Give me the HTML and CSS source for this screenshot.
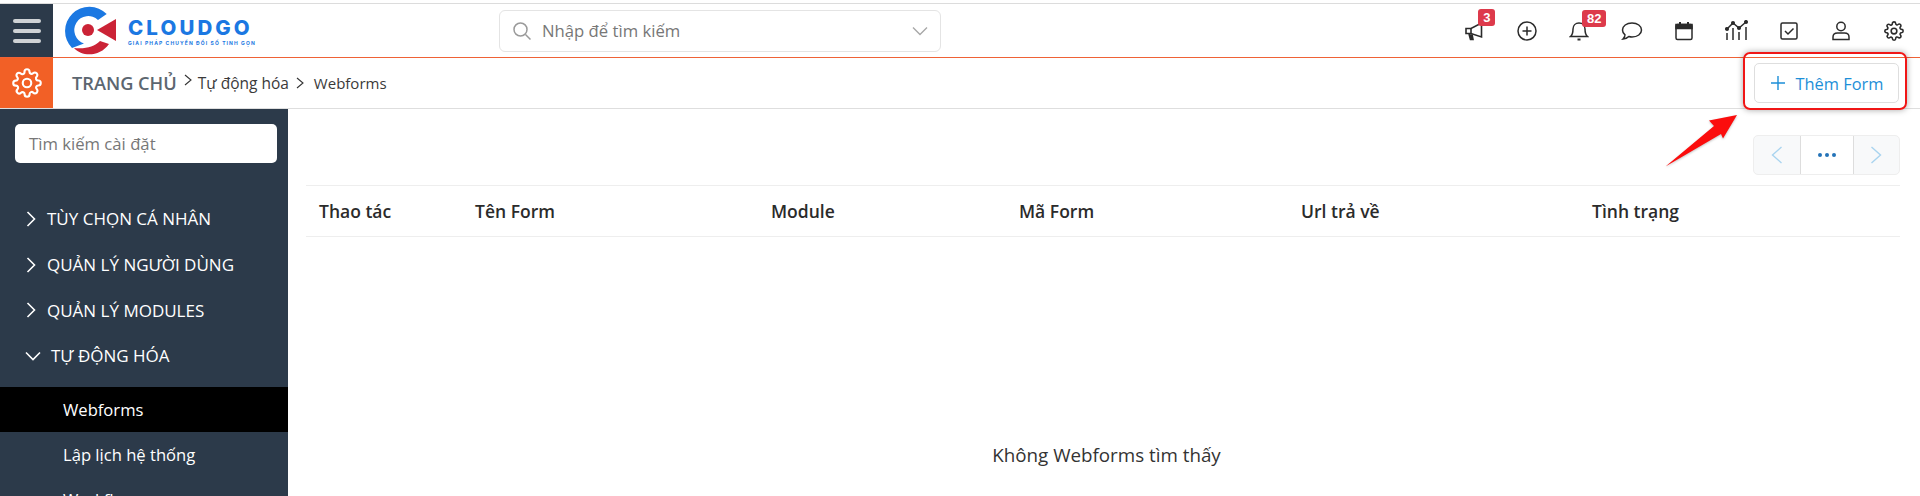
FILE: index.html
```html
<!DOCTYPE html>
<html lang="vi">
<head>
<meta charset="utf-8">
<title>Webforms</title>
<link rel="stylesheet" href="styles.css">
</head>
<body>
<div class="page">
  <header class="topbar">
    <button class="burger" aria-label="Menu"><span></span><span></span><span></span></button>
    <div class="logo">
      <svg class="logo-mark" width="54" height="50" viewBox="0 0 54 50">
        <path d="M42.7 9 A24 24 0 1 0 8 43 L20 38.4 A14 14 0 1 1 34 15 Z" fill="#1b78e2"/>
        <path d="M10 43 C18 52 36 52 45 39 L36 36 C30 42 22 44 10 43 Z" fill="#cb2336"/>
        <circle cx="24" cy="25" r="6" fill="#cb2336"/>
        <path d="M33 25 L52 14 V36 Z" fill="#cb2336"/>
      </svg>
      <div class="logo-text">
        <div class="logo-name">CLOUDGO</div>
        <div class="logo-sub">GIẢI PHÁP CHUYỂN ĐỔI SỐ TINH GỌN</div>
      </div>
    </div>
    <div class="global-search">
      <svg width="20" height="20" viewBox="0 0 20 20" fill="none" stroke="#9a9a9a" stroke-width="1.5"><circle cx="8.5" cy="8.5" r="6.5"/><path d="M13.5 13.5 L18.5 18.5"/></svg>
      <span class="global-search-text">Nhập để tìm kiếm</span>
      <svg class="search-caret" width="16" height="10" viewBox="0 0 16 10" fill="none" stroke="#a8a8a8" stroke-width="1.4"><path d="M1 1.5 L8 8.5 L15 1.5"/></svg>
    </div>
    <nav class="tools">
      <div class="tool">
        <svg width="20" height="20" viewBox="0 0 20 20" fill="none" stroke="#2b2b2b" stroke-width="1.6"><path d="M1 7.5 H6 L16.5 2 V16 L6 12.5 H1 Z"/><path d="M6 7.5 V12.5"/><path d="M4 13 L5.5 18.5 H8 L7 13.5" fill="#2b2b2b"/></svg>
        <span class="badge badge-one">3</span>
      </div>
      <div class="tool">
        <svg width="20" height="20" viewBox="0 0 20 20" fill="none" stroke="#2b2b2b" stroke-width="1.5"><circle cx="10" cy="10" r="9"/><path d="M10 5.5 V14.5 M5.5 10 H14.5"/></svg>
      </div>
      <div class="tool">
        <svg width="20" height="20" viewBox="0 0 20 20" fill="none" stroke="#2b2b2b" stroke-width="1.5"><path d="M1.5 15.5 C4 13.5 4 11 4 8 C4 4.5 6.5 2 10 2 C13.5 2 16 4.5 16 8 C16 11 16 13.5 18.5 15.5 Z"/><path d="M8.5 18.5 H11.5" stroke-width="2"/></svg>
        <span class="badge badge-two">82</span>
      </div>
      <div class="tool">
        <svg width="22" height="20" viewBox="0 0 22 20" fill="none" stroke="#2b2b2b" stroke-width="1.5"><path d="M11 2 C16.5 2 20.5 5 20.5 9 C20.5 13 16.5 16 11 16 C9.8 16 8.8 15.8 7.8 15.5 C6.5 16.8 4.5 17.8 2 18 C3.2 16.8 4 15.4 4 13.8 C2.4 12.6 1.5 11 1.5 9 C1.5 5 5.5 2 11 2 Z"/></svg>
      </div>
      <div class="tool">
        <svg width="20" height="20" viewBox="0 0 20 20" fill="none" stroke="#2b2b2b" stroke-width="1.5"><rect x="2" y="3.5" width="16" height="15" rx="1.5"/><path d="M2 3.5 H18 V7.5 H2 Z" fill="#2b2b2b"/><path d="M6 1 V4 M14 1 V4" stroke-width="2"/></svg>
      </div>
      <div class="tool">
        <svg width="24" height="22" viewBox="0 0 24 22" fill="none" stroke="#2b2b2b" stroke-width="1.5"><path d="M2 9 L8 3 L14 8 L21 2"/><circle cx="2" cy="9" r="1.3" fill="#2b2b2b"/><circle cx="8" cy="3" r="1.3" fill="#2b2b2b"/><circle cx="14" cy="8" r="1.3" fill="#2b2b2b"/><circle cx="21" cy="2" r="1.3" fill="#2b2b2b"/><path d="M2 13 V20 M8 8 V20 M14 12 V20 M21 7 V20"/></svg>
      </div>
      <div class="tool">
        <svg width="20" height="20" viewBox="0 0 20 20" fill="none" stroke="#2b2b2b" stroke-width="1.5"><rect x="2" y="2" width="16" height="16" rx="1.5"/><path d="M6 10 L9 13 L14.5 7.5"/></svg>
      </div>
      <div class="tool">
        <svg width="20" height="20" viewBox="0 0 20 20" fill="none" stroke="#2b2b2b" stroke-width="1.5"><circle cx="10" cy="5.5" r="4.2"/><path d="M2 18.5 V16 C2 13.5 4 12 6.5 12 H13.5 C16 12 18 13.5 18 16 V18.5 Z"/></svg>
      </div>
      <div class="tool">
        <svg width="20" height="20" viewBox="0 0 24 24" fill="none" stroke="#2b2b2b" stroke-width="1.9"><circle cx="12" cy="12" r="3.4"/><path d="M19.4 15a1.65 1.65 0 0 0 .33 1.82l.06.06a2 2 0 1 1-2.83 2.83l-.06-.06a1.65 1.65 0 0 0-2.82 1.17V21a2 2 0 1 1-4 0v-.09a1.65 1.65 0 0 0-2.82-1.12l-.06.06a2 2 0 1 1-2.83-2.83l.06-.06a1.65 1.65 0 0 0-1.17-2.82H3a2 2 0 1 1 0-4h.09a1.65 1.65 0 0 0 1.12-2.82l-.06-.06a2 2 0 1 1 2.83-2.83l.06.06a1.65 1.65 0 0 0 1.82.33H9a1.65 1.65 0 0 0 1-1.51V3a2 2 0 1 1 4 0v.09a1.65 1.65 0 0 0 2.82 1.12l.06-.06a2 2 0 1 1 2.83 2.83l-.06.06a1.65 1.65 0 0 0-.33 1.82V9a1.65 1.65 0 0 0 1.51 1H21a2 2 0 1 1 0 4h-.09a1.65 1.65 0 0 0-1.51 1z"/></svg>
      </div>
    </nav>
  </header>

  <div class="crumbbar">
    <div class="crumb-icon">
      <svg width="30" height="30" viewBox="0 0 24 24" fill="none" stroke="#fff" stroke-width="1.7"><circle cx="12" cy="12" r="3.4"/><path d="M19.4 15a1.65 1.65 0 0 0 .33 1.82l.06.06a2 2 0 1 1-2.83 2.83l-.06-.06a1.65 1.65 0 0 0-2.82 1.17V21a2 2 0 1 1-4 0v-.09a1.65 1.65 0 0 0-2.82-1.12l-.06.06a2 2 0 1 1-2.83-2.83l.06-.06a1.65 1.65 0 0 0-1.17-2.82H3a2 2 0 1 1 0-4h.09a1.65 1.65 0 0 0 1.12-2.82l-.06-.06a2 2 0 1 1 2.83-2.83l.06.06a1.65 1.65 0 0 0 1.82.33H9a1.65 1.65 0 0 0 1-1.51V3a2 2 0 1 1 4 0v.09a1.65 1.65 0 0 0 2.82 1.12l.06-.06a2 2 0 1 1 2.83 2.83l-.06.06a1.65 1.65 0 0 0-.33 1.82V9a1.65 1.65 0 0 0 1.51 1H21a2 2 0 1 1 0 4h-.09a1.65 1.65 0 0 0-1.51 1z"/></svg>
    </div>
    <div class="crumbs">
      <span class="crumb-home">TRANG CHỦ</span>
      <svg class="crumb-sep crumb-sep-high" width="8" height="12" viewBox="0 0 8 12" fill="none" stroke="#333" stroke-width="1.1"><path d="M1 1 L7 6 L1 11"/></svg>
      <span class="crumb-item">Tự động hóa</span>
      <svg class="crumb-sep" width="8" height="12" viewBox="0 0 8 12" fill="none" stroke="#333" stroke-width="1.1"><path d="M1 1 L7 6 L1 11"/></svg>
      <span class="crumb-item crumb-last">Webforms</span>
    </div>
    <button class="add-btn">
      <svg width="16" height="16" viewBox="0 0 16 16" fill="none" stroke="#1d8fd8" stroke-width="1.4"><path d="M8 1 V15 M1 8 H15"/></svg>
      <span>Thêm Form</span>
    </button>
  </div>

  <div class="main">
    <aside class="sidebar">
      <div class="side-search">Tìm kiếm cài đặt</div>
      <ul class="menu">
        <li class="menu-item"><svg width="10" height="16" viewBox="0 0 10 16" fill="none" stroke="#fff" stroke-width="1.6"><path d="M1.5 1 L8.5 8 L1.5 15"/></svg>TÙY CHỌN CÁ NHÂN</li>
        <li class="menu-item"><svg width="10" height="16" viewBox="0 0 10 16" fill="none" stroke="#fff" stroke-width="1.6"><path d="M1.5 1 L8.5 8 L1.5 15"/></svg>QUẢN LÝ NGƯỜI DÙNG</li>
        <li class="menu-item"><svg width="10" height="16" viewBox="0 0 10 16" fill="none" stroke="#fff" stroke-width="1.6"><path d="M1.5 1 L8.5 8 L1.5 15"/></svg>QUẢN LÝ MODULES</li>
        <li class="menu-item menu-open"><svg width="16" height="10" viewBox="0 0 16 10" fill="none" stroke="#fff" stroke-width="1.6"><path d="M1 1.5 L8 8.5 L15 1.5"/></svg>TỰ ĐỘNG HÓA</li>
      </ul>
      <ul class="submenu">
        <li class="sub-item sub-active">Webforms</li>
        <li class="sub-item">Lập lịch hệ thống</li>
        <li class="sub-item">Workflows</li>
      </ul>
    </aside>

    <section class="content">
      <div class="pager-row">
        <div class="pager">
          <span class="pager-btn"><svg width="12" height="18" viewBox="0 0 12 18" fill="none" stroke="#a9d4ef" stroke-width="1.4"><path d="M10.5 1 L1.5 9 L10.5 17"/></svg></span>
          <span class="pager-btn pager-mid"><i></i><i></i><i></i></span>
          <span class="pager-btn"><svg width="12" height="18" viewBox="0 0 12 18" fill="none" stroke="#a9d4ef" stroke-width="1.4"><path d="M1.5 1 L10.5 9 L1.5 17"/></svg></span>
        </div>
      </div>
      <div class="table-head">
        <span class="col col-action">Thao tác</span>
        <span class="col col-name">Tên Form</span>
        <span class="col col-module">Module</span>
        <span class="col col-code">Mã Form</span>
        <span class="col col-url">Url trả về</span>
        <span class="col col-status">Tình trạng</span>
      </div>
      <div class="empty">Không Webforms tìm thấy</div>
    </section>
  </div>

  <div class="note-box"></div>
  <svg class="note-arrow" width="84" height="68" viewBox="0 0 84 68"><path d="M0.5 54.5 L49 14 L44 8.5 L72 3 L58 26.5 L56 22 Z" fill="#fb0d0d"/></svg>
</div>
</body>
</html>
```

FILE: styles.css
```css
* { box-sizing: border-box; }
html, body { margin: 0; padding: 0; height: 100%; overflow: hidden; background: #fff; }
body { font-family: "Open Sans", "Noto Sans", sans-serif; color: #333; }
ul { list-style: none; margin: 0; padding: 0; }
.page { position: relative; width: 1920px; height: 496px; overflow: hidden; padding-top: 3px; }

.topbar { display: flex; align-items: center; height: 55px; border-top: 1px solid #dcdcdc; border-bottom: 1px solid #ef6236; }
.burger { width: 53px; height: 53px; flex: none; background: #2c3a4a; border: 0; padding: 0; display: flex; flex-direction: column; align-items: center; justify-content: center; gap: 6px; }
.burger span { display: block; width: 28px; height: 4px; border-radius: 2px; background: #cfd2d5; }
.logo { display: flex; align-items: center; width: 450px; padding-left: 11px; flex: none; }
.logo-mark { flex: none; margin-top: -1px; }
.logo-text { margin-left: 10px; display: flex; flex-direction: column; }
.logo-name { font-family: Inter, "Open Sans", sans-serif; font-weight: 800; font-size: 20.5px; line-height: 22px; letter-spacing: 3.1px; color: #1b78e2; margin-top: 2px; }
.logo-sub { font-family: Inter, "Open Sans", sans-serif; font-size: 5px; font-weight: 700; line-height: 8px; letter-spacing: 1.1px; color: #1b78e2; white-space: nowrap; }
.global-search { width: 442px; height: 42px; margin-left: -4px; border: 1px solid #e4e4e4; border-radius: 6px; display: flex; align-items: center; padding: 0 12px 0 12px; }
.global-search-text { font-size: 16.7px; color: #777; margin-left: 10px; flex: 1; }
.tools { display: flex; margin-left: auto; align-items: center; }
.tool { position: relative; width: 52.4px; height: 40px; display: flex; align-items: center; justify-content: center; }
.badge { position: absolute; background: #dd3a4b; color: #fff; font-family: "Liberation Sans", sans-serif; font-weight: 700; font-size: 13px; line-height: 17px; height: 17px; border-radius: 3px; text-align: center; }
.badge-one { top: -2px; left: 30px; width: 17px; }
.badge-two { top: -1px; left: 29px; width: 24px; }

.crumbbar { display: flex; align-items: center; height: 51px; border-bottom: 1px solid #dedede; }
.crumb-icon { width: 53px; height: 50px; flex: none; background: #f26026; display: flex; align-items: center; justify-content: center; }
.crumbs { display: flex; align-items: center; margin-left: 19px; }
.crumb-home { font-size: 18.2px; font-weight: 600; color: #5c6670; }
.crumb-sep { margin: 0 6px 0 7px; }
.crumb-sep-high { margin-top: -6px; }
.crumb-item { font-size: 15.5px; color: #3a3a3a; }
.crumb-last { margin-left: 4px; font-size: 15px; }
.add-btn { margin-left: auto; margin-right: 21px; width: 145px; height: 40px; background: #fff; border: 1px solid #dedede; border-radius: 5px; display: flex; align-items: center; justify-content: center; gap: 10px; font-family: inherit; font-size: 16.4px; color: #1d8fd8; padding: 0; }

.main { display: flex; height: 387px; }
.sidebar { width: 288px; flex: none; background: #2c3a4a; padding-top: 15px; overflow: hidden; }
.side-search { width: 262px; height: 39px; margin-left: 15px; background: #fff; border-radius: 5px; font-size: 16.7px; line-height: 39px; padding-left: 14px; color: #777; }
.menu { margin-top: 33px; }
.menu-item { display: flex; align-items: center; height: 45.7px; padding-left: 26px; font-size: 17px; color: #fff; }
.menu-item svg { margin-right: 11px; }
.menu-open { padding-left: 25px; }
.menu-open svg { margin-right: 10px; }
.submenu { margin-top: 8px; }
.sub-item { height: 45px; line-height: 45px; padding-left: 63px; font-size: 16.6px; color: #fff; }
.sub-active { background: #000; }

.content { flex: 1; padding: 0 20px 0 18px; min-width: 0; }
.pager-row { display: flex; justify-content: flex-end; padding-top: 26px; height: 76px; }
.pager { display: flex; height: 40px; width: 147px; background: #f8f9fa; border: 1px solid #eeeeee; border-radius: 5px; }
.pager-btn { flex: 1; display: flex; align-items: center; justify-content: center; }
.pager-mid { flex: none; width: 54px; background: #fff; border-left: 1px solid #ddd; border-right: 1px solid #ddd; gap: 3px; }
.pager-mid i { display: block; width: 4px; height: 4px; border-radius: 50%; background: #2473b8; }
.table-head { position: relative; height: 52px; border-top: 1px solid #eeeeee; border-bottom: 1px solid #eeeeee; display: grid; grid-template-columns: 156px 296px 248px 282px 291px 1fr; align-items: center; padding-left: 13px; font-size: 17.5px; font-weight: 600; color: #2b2b2b; }
.empty { text-align: center; font-size: 18.8px; line-height: 24px; margin-top: 206px; color: #333; margin-left: 7px; }

.note-box { position: absolute; left: 1743px; top: 52px; width: 164px; height: 58px; border: 2px solid #f01616; border-radius: 7px; box-shadow: 0 0 6px rgba(0,0,0,.35); }
.note-arrow { position: absolute; left: 1665px; top: 112px; filter: drop-shadow(0 1px 1px rgba(0,0,0,.25)); }
```
